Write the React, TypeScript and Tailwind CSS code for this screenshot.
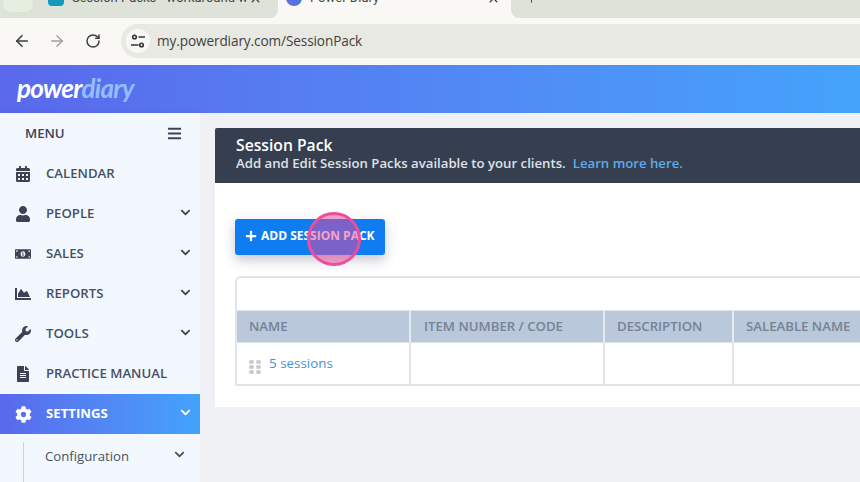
import React from "react";
import { FaCalendarAlt, FaUser, FaMoneyBillAlt, FaChartArea, FaWrench, FaFileAlt, FaCog, FaBars, FaPlus, FaChevronDown } from "react-icons/fa";
import { ArrowLeft, ArrowRight, RotateCw, X, Plus } from "lucide-react";

const items = [
  { label: "CALENDAR", Icon: FaCalendarAlt, chev: false },
  { label: "PEOPLE", Icon: FaUser, chev: true },
  { label: "SALES", Icon: FaMoneyBillAlt, chev: true },
  { label: "REPORTS", Icon: FaChartArea, chev: true },
  { label: "TOOLS", Icon: FaWrench, chev: true },
  { label: "PRACTICE MANUAL", Icon: FaFileAlt, chev: false },
];

function SiteControls() {
  return (
    <svg width="16" height="16" viewBox="0 0 16 16" fill="none" stroke="#333" strokeWidth="1.6">
      <circle cx="4.5" cy="4" r="1.8" />
      <path d="M8.5 4H15M1 12h7.5" />
      <circle cx="11.5" cy="12" r="1.8" />
    </svg>
  );
}

function Chrome() {
  return (
    <div className="shrink-0">
      <div className="h-[18px] bg-[#f9f8f4] overflow-hidden flex items-start text-[13px] text-[#44483f] font-['Roboto',sans-serif]">
        <div className="w-[278px] h-[18px] shrink-0 bg-[#dee3d9] rounded-br-lg flex items-start">
          <div className="w-[30px] h-[30px] ml-[3px] -mt-[18px] rounded-lg bg-[#e6eee0] shrink-0" />
          <div className="-mt-[18px] h-[32px] flex items-center pl-[15px]">
            <div className="w-[16px] h-[16px] rounded-sm bg-[#1199b8] shrink-0" />
            <span className="ml-[8px] w-[174px] overflow-hidden whitespace-nowrap">Session Packs - workaround wh</span>
            <X size={13} strokeWidth={2.5} className="shrink-0 ml-[3px]" />
          </div>
        </div>
        <div className="w-[233px] h-[18px] shrink-0">
          <div className="-mt-[18px] h-[32px] flex items-center pl-[8px]">
            <div className="w-[16px] h-[16px] rounded-full bg-gradient-to-br from-[#7b5fdc] to-[#2f7fe0] shrink-0" />
            <span className="ml-[8px] w-[177px] whitespace-nowrap">Power Diary</span>
            <X size={13} strokeWidth={2.5} className="shrink-0" />
          </div>
        </div>
        <div className="flex-1 h-[18px] bg-[#dee3d9] rounded-bl-lg pl-[14px]">
          <Plus size={13} className="-mt-[8px] text-[#555]" />
        </div>
      </div>
      <div className="h-[47px] bg-[#f9f8f4] flex items-center pl-[13px] pb-[1px]">
        <ArrowLeft size={18} strokeWidth={2.2} className="text-[#3d3f3d]" />
        <ArrowRight size={18} strokeWidth={2} className="text-[#a0a19e] ml-[17px]" />
        <RotateCw size={16} strokeWidth={2.2} className="text-[#3d3f3d] ml-[19px]" />
        <div className="ml-[20px] flex-1 h-[34px] bg-[#e8e9e3] rounded-l-full flex items-center pl-[5px]">
          <div className="w-[24px] h-[24px] rounded-full bg-[#f9f8f4] flex items-center justify-center">
            <SiteControls />
          </div>
          <span className="ml-[7px] text-[13.6px] text-[#3f413e] font-['Open_Sans',sans-serif] tracking-[-0.1px]">my.powerdiary.com/SessionPack</span>
        </div>
      </div>
    </div>
  );
}

function Sidebar() {
  return (
    <aside className="w-[200px] shrink-0 bg-[#f3f8ff] shadow-[2px_0_6px_rgba(0,0,0,0.08)] text-[#3b4354] overflow-hidden">
      <div className="h-[41px] flex items-center justify-between pl-[25px] pr-[18px]">
        <span className="text-[13.2px] font-semibold">MENU</span>
        <FaBars size={15} />
      </div>
      {items.map(({ label, Icon, chev }) => (
        <div key={label} className="h-[40px] flex items-center pl-[15px] pr-[9px]">
          <span className="w-[31px] shrink-0"><Icon size={16} /></span>
          <span className="text-[13.2px] font-semibold flex-1 text-[#465064]">{label}</span>
          {chev && <FaChevronDown size={11} className="mb-[3px]" />}
        </div>
      ))}
      <div className="h-[40px] flex items-center pl-[15px] pr-[9px] bg-gradient-to-r from-[#5a68ec] to-[#42a3fb] text-white">
        <span className="w-[31px] shrink-0"><FaCog size={17} /></span>
        <span className="text-[13.2px] font-bold flex-1">SETTINGS</span>
        <FaChevronDown size={11} className="mb-[3px]" />
      </div>
      <div className="ml-[23px] mt-[8px] border-l border-[#ccd2da] h-[60px] pl-[21px] pr-[15px] flex items-start justify-between text-[#4a5162]">
        <span className="text-[13.2px] mt-[5px]">Configuration</span>
        <FaChevronDown size={11} className="mt-[7px]" />
      </div>
    </aside>
  );
}

const cols = [
  { label: "NAME", w: "w-[174px]", pad: "pl-[12px]" },
  { label: "ITEM NUMBER / CODE", w: "w-[194px]", pad: "pl-[13px]" },
  { label: "DESCRIPTION", w: "w-[129px]", pad: "pl-[12px]" },
  { label: "SALEABLE NAME", w: "flex-1", pad: "pl-[12px]" },
];

function Main() {
  return (
    <main className="flex-1 min-w-0 bg-[#eff1f5] pt-[15px] pl-[15px] overflow-hidden">
      <div className="w-[700px] h-[279px] bg-white rounded-t-[2px]">
        <div className="h-[55px] bg-[#363f50] rounded-t-[2px] pl-[21px] pt-[7px] text-white">
          <div className="text-[15.7px] leading-[20px] font-semibold">Session Pack</div>
          <div className="text-[13.2px] leading-[17px] font-semibold text-[#dfe2e6] whitespace-nowrap">
            Add and Edit Session Packs available to your clients.
            <span className="text-[#5aade8] ml-[7px] font-semibold">Learn more here.</span>
          </div>
        </div>
        <div className="pl-[20px] pt-[36px]">
          <div className="relative w-[150px] h-[36px]">
            <button className="w-full h-full rounded-[3px] bg-[#0f7cf2] text-white text-[12px] font-bold flex items-center pl-[10px] pb-[2px] shadow-[0_5px_12px_rgba(60,70,90,0.3)]">
              <FaPlus size={12} className="mr-[4px]" />
              ADD SESSION PACK
            </button>
            <div className="absolute left-[72px] top-[-7px] w-[54px] h-[54px] rounded-full border-[3px] border-[#ee4c9c] bg-[#e9479b]/50" />
          </div>
        </div>
        <div className="ml-[20px] mt-[21px] h-[110px] border-2 border-r-0 border-[#dfe5ea] rounded-tl-[6px]">
          <div className="h-[32px]" />
          <div className="flex h-[33px] bg-[#b9c8da] border-y border-[#dfe5ea] text-[#758395] text-[13.2px] font-semibold">
            {cols.map((c, i) => (
              <div key={c.label} className={`${c.w} ${c.pad} ${i < 3 ? "border-r-2 border-[#e6ebef]" : ""} flex items-center whitespace-nowrap`}>{c.label}</div>
            ))}
          </div>
          <div className="flex h-[41px]">
            {cols.map((c, i) => (
              <div key={c.label} className={`${c.w} ${i < 3 ? "border-r-2 border-[#dfe5ea]" : ""} flex items-center`}>
                {i === 0 && (
                  <>
                    <div className="ml-[12px] mt-[6px] grid grid-cols-2 gap-x-[2px] gap-y-[1px]">
                      {[0, 1, 2, 3, 4, 5].map((d) => <span key={d} className="w-[5px] h-[4px] rounded-full bg-[#c7cad0]" />)}
                    </div>
                    <span className="ml-[8px] text-[13.4px] text-[#4492dc]">5 sessions</span>
                  </>
                )}
              </div>
            ))}
          </div>
        </div>
      </div>
    </main>
  );
}

export default function App() {
  return (
    <div className="w-[860px] h-[482px] overflow-hidden flex flex-col font-['Open_Sans',sans-serif]">
      <Chrome />
      <header className="h-[48px] shrink-0 bg-gradient-to-r from-[#5a68ec] to-[#44a3fb] flex items-center pl-[17px] pb-[3px]">
        <span className="text-[26px] leading-none italic font-bold tracking-[-0.7px] font-['Lato',sans-serif] text-white">power<span className="text-[#93bdfb] font-bold">diary</span></span>
      </header>
      <div className="flex flex-1 min-h-0">
        <Sidebar />
        <Main />
      </div>
    </div>
  );
}
